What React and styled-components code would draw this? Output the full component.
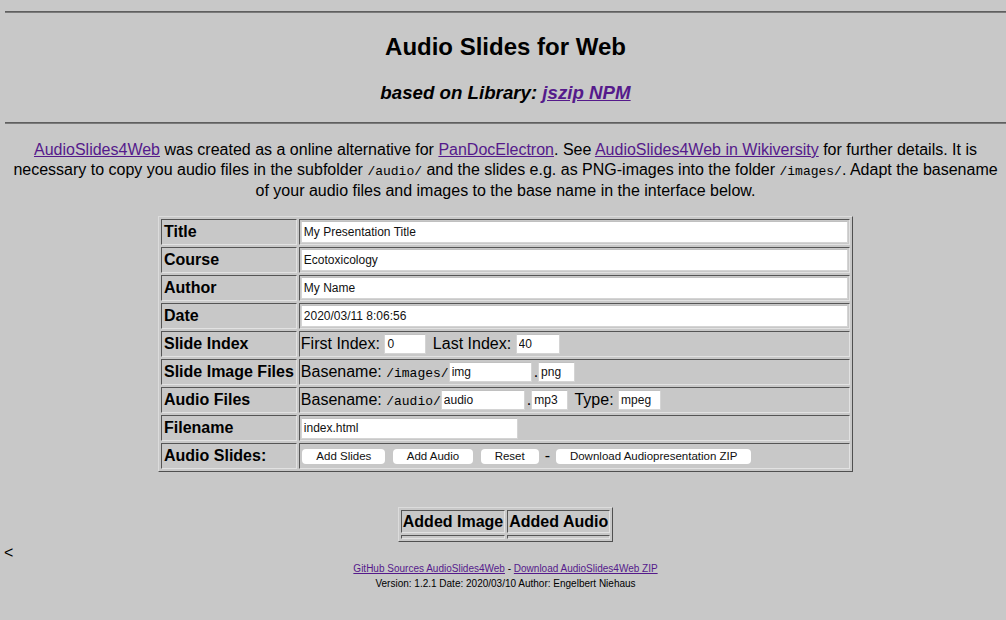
import React from "react";
import styled, { createGlobalStyle } from "styled-components";

const GlobalStyle = createGlobalStyle`
  html, body {
    margin: 0;
    padding: 0;
    background: #c8c8c8;
  }
  body {
    font-family: "Liberation Sans", Arial, sans-serif;
    color: #000;
  }
`;

const Page = styled.div`
  padding: 11px 0 20px 5px;
  text-align: center;
`;

const Rule = styled.hr`
  height: 0;
  margin: ${(p) => p.$top || 0}px 0 0;
  border: none;
  border-top: 1px solid #5f5f5f;
  border-bottom: 1px solid #7a7a7a;
`;

const Heading = styled.h2`
  margin: 20px 0 0;
  font-size: 24px;
  line-height: 28px;
  font-weight: bold;
`;

const SubHeading = styled.h3`
  margin: 21px 0 0;
  font-size: 18.7px;
  line-height: 22px;
  font-weight: bold;
  font-style: italic;
`;

const Link = styled.a`
  color: #551a8b;
  text-decoration: underline;
`;

const Intro = styled.p`
  margin: 16px 0 0;
  font-size: 16px;
  line-height: 19.5px;
`;

const Code = styled.code`
  font-family: "Liberation Mono", "Courier New", monospace;
  font-size: 13px;
`;

const Table = styled.table`
  margin: ${(p) => p.$top}px auto 0;
  width: ${(p) => (p.$width ? `${p.$width}px` : "auto")};
  border-collapse: separate;
  border-spacing: 2px;
  border: 1px solid;
  border-color: #dcdcdc #505050 #505050 #dcdcdc;
  text-align: left;
`;

const Cell = styled.td`
  border: 1px solid;
  border-color: #555 #e2e2e2 #e2e2e2 #555;
  padding: 1px;
  vertical-align: middle;
`;

const Label = styled(Cell)`
  width: 128px;
  padding: 1px 2px;
  font-size: 16px;
  font-weight: bold;
  white-space: nowrap;
`;

const Line = styled.div`
  height: 22px;
  line-height: 22px;
  font-size: 16px;
  white-space: nowrap;
`;

const Field = styled.input`
  box-sizing: border-box;
  display: ${(p) => (p.$block ? "block" : "inline-block")};
  width: ${(p) => (p.$w ? `${p.$w}px` : "100%")};
  height: ${(p) => p.$h || 20}px;
  margin: ${(p) => (p.$block ? "0" : "0 2px 0 0")};
  padding: 0 2px;
  vertical-align: middle;
  border: 1px solid #d4d4d4;
  border-top-color: #c0c0c0;
  background: #fff;
  font-family: "Liberation Sans", Arial, sans-serif;
  font-size: 12px;
  color: #111;
  outline: none;
`;

const Button = styled.button`
  height: 15px;
  margin: 0 1.5px;
  padding: 0 14px;
  vertical-align: middle;
  border: none;
  border-radius: 4px;
  background: #fff;
  font-family: "Liberation Sans", Arial, sans-serif;
  font-size: 11.5px;
  line-height: 15px;
  color: #111;
`;

const HeadCell = styled(Cell)`
  font-size: 16px;
  line-height: 19px;
  font-weight: bold;
  white-space: nowrap;
`;

const Stray = styled.div`
  margin: 3px 0 0 -1px;
  text-align: left;
  font-size: 16px;
  line-height: 16px;
`;

const Footer = styled.div`
  font-size: 10px;
  line-height: 15px;
`;

const FieldRow = ({ label, children }) => (
  <tr>
    <Label>{label}</Label>
    <Cell>{children}</Cell>
  </tr>
);

const App = () => {
  return (
    <>
      <GlobalStyle />
      <Page>
        <Rule />
        <Heading>Audio Slides for Web</Heading>
        <SubHeading>
          based on Library: <Link href="#">jszip NPM</Link>
        </SubHeading>
        <Rule $top={18} />
        <Intro>
          <Link href="#">AudioSlides4Web</Link> was created as a online
          alternative for <Link href="#">PanDocElectron</Link>. See{" "}
          <Link href="#">AudioSlides4Web in Wikiversity</Link> for further
          details. It is necessary to copy you audio files in the subfolder{" "}
          <Code>/audio/</Code> and the slides e.g. as PNG-images into the
          folder <Code>/images/</Code>. Adapt the basename of your audio files
          and images to the base name in the interface below.
        </Intro>

        <Table $top={15} $width={695}>
          <tbody>
            <FieldRow label="Title">
              <Field $block $h={22} defaultValue="My Presentation Title" />
            </FieldRow>
            <FieldRow label="Course">
              <Field $block $h={22} defaultValue="Ecotoxicology" />
            </FieldRow>
            <FieldRow label="Author">
              <Field $block $h={22} defaultValue="My Name" />
            </FieldRow>
            <FieldRow label="Date">
              <Field $block $h={22} defaultValue="2020/03/11 8:06:56" />
            </FieldRow>
            <FieldRow label="Slide Index">
              <Line>
                First Index: <Field $w={42} defaultValue="0" /> Last Index:{" "}
                <Field $w={44} defaultValue="40" />
              </Line>
            </FieldRow>
            <FieldRow label="Slide Image Files">
              <Line>
                Basename: <Code>/images/</Code>
                <Field $w={83} defaultValue="img" />.
                <Field $w={37} defaultValue="png" />
              </Line>
            </FieldRow>
            <FieldRow label="Audio Files">
              <Line>
                Basename: <Code>/audio/</Code>
                <Field $w={84} defaultValue="audio" />.
                <Field $w={37} defaultValue="mp3" /> Type:{" "}
                <Field $w={43} defaultValue="mpeg" />
              </Line>
            </FieldRow>
            <FieldRow label="Filename">
              <Line>
                <Field $w={217} $h={21} defaultValue="index.html" />
              </Line>
            </FieldRow>
            <FieldRow label="Audio Slides:">
              <Line>
                <Button>Add Slides</Button> <Button>Add Audio</Button>{" "}
                <Button>Reset</Button> - <Button>Download Audiopresentation ZIP</Button>
              </Line>
            </FieldRow>
          </tbody>
        </Table>

        <Table $top={35}>
          <tbody>
            <tr>
              <HeadCell>Added Image</HeadCell>
              <HeadCell>Added Audio</HeadCell>
            </tr>
            <tr>
              <Cell />
              <Cell />
            </tr>
          </tbody>
        </Table>

        <Stray>&lt;</Stray>

        <Footer>
          <Link href="#">GitHub Sources AudioSlides4Web</Link> -{" "}
          <Link href="#">Download AudioSlides4Web ZIP</Link>
          <br />
          Version: 1.2.1 Date: 2020/03/10 Author: Engelbert Niehaus
        </Footer>
      </Page>
    </>
  );
};

export default App;
